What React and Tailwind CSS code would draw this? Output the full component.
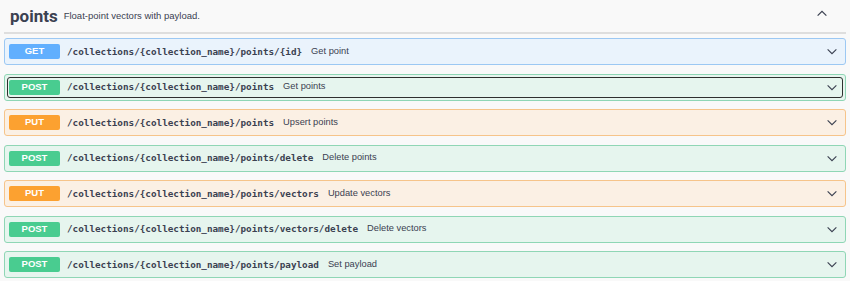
const METHOD_STYLES = {
  GET: { row: 'border-[#9cc8f3] bg-[#eaf3fc]', badge: 'bg-[#61affe]' },
  POST: { row: 'border-[#8fd6b5] bg-[#e6f5ee]', badge: 'bg-[#49cc90]' },
  PUT: { row: 'border-[#f6c48a] bg-[#fbf0e4]', badge: 'bg-[#fca130]' },
};

const operations = [
  { method: 'GET', path: '/collections/{collection_name}/points/{id}', summary: 'Get point' },
  { method: 'POST', path: '/collections/{collection_name}/points', summary: 'Get points', focused: true },
  { method: 'PUT', path: '/collections/{collection_name}/points', summary: 'Upsert points' },
  { method: 'POST', path: '/collections/{collection_name}/points/delete', summary: 'Delete points' },
  { method: 'PUT', path: '/collections/{collection_name}/points/vectors', summary: 'Update vectors' },
  { method: 'POST', path: '/collections/{collection_name}/points/vectors/delete', summary: 'Delete vectors' },
  { method: 'POST', path: '/collections/{collection_name}/points/payload', summary: 'Set payload' },
];

export default function App() {
  return (
    <div className="h-[281px] w-[850px] overflow-hidden bg-[#f9f9f9] px-[4px] text-[#3b4151] [font-family:'Liberation_Sans',Arial,sans-serif]">
      {/* tag header */}
      <div className="flex h-[34px] items-center border-b-2 border-[#dedede] pl-[6px] pr-[18px]">
        <span className="text-[17px] font-bold leading-none [font-family:Roboto,'Liberation_Sans',sans-serif]">points</span>
        <span className="ml-[6px] mt-[1px] text-[9.5px]">Float-point vectors with payload.</span>
        <ChevronUp className="ml-auto mt-[-6px]" />
      </div>

      <div className="mt-[4px] flex flex-col gap-[8.5px]">
        {operations.map((op) => (
          <Operation key={op.method + op.path} {...op} />
        ))}
      </div>
    </div>
  );
}

function Operation({ method, path, summary, focused }) {
  const style = METHOD_STYLES[method];
  return (
    <div className={`rounded-[3px] border p-[2px] ${style.row}`}>
      <div
        className={`flex h-[21px] items-center rounded-[3px] border-[1.5px] pl-[1px] pr-[4px] ${
          focused ? 'border-[#2f2f2f]' : 'border-transparent'
        }`}
      >
        <span
          className={`flex h-[15px] w-[51px] shrink-0 items-center justify-center rounded-[2px] text-[9.5px] font-bold text-white ${style.badge}`}
        >
          {method}
        </span>
        <span className="ml-[7px] text-[9.3px] font-bold [font-family:'DejaVu_Sans_Mono','Liberation_Mono',monospace]">
          {path}
        </span>
        <span className="ml-[9px] text-[9.3px]">{summary}</span>
        <ChevronDown className="ml-auto" />
      </div>
    </div>
  );
}

function ChevronDown({ className = '' }) {
  return (
    <svg viewBox="0 0 12 8" className={`h-[7px] w-[12px] ${className}`} fill="none" stroke="#3b4151" strokeWidth="1.3" aria-hidden="true">
      <path d="M1 1.5l5 5 5-5" />
    </svg>
  );
}

function ChevronUp({ className = '' }) {
  return (
    <svg viewBox="0 0 12 8" className={`h-[7px] w-[12px] ${className}`} fill="none" stroke="#3b4151" strokeWidth="1.4" aria-hidden="true">
      <path d="M1 6.5l5-5 5 5" />
    </svg>
  );
}
